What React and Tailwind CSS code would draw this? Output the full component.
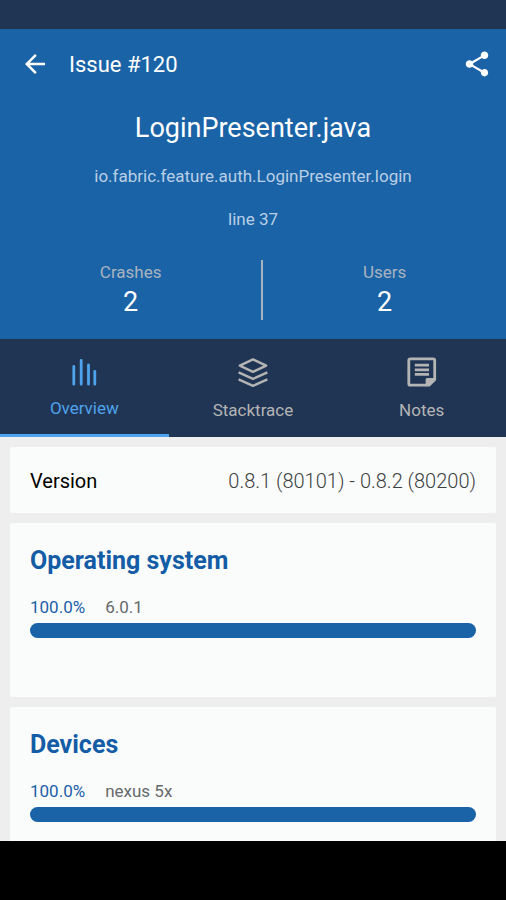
import { useState } from 'react';
import { MdArrowBack, MdShare } from 'react-icons/md';

const issue = {
  number: 120,
  file: 'LoginPresenter.java',
  method: 'io.fabric.feature.auth.LoginPresenter.login',
  line: 37,
  crashes: 2,
  users: 2,
  versions: '0.8.1 (80101) - 0.8.2 (80200)',
};

const breakdowns = [
  { title: 'Operating system', name: '6.0.1', percent: 100 },
  { title: 'Devices', name: 'nexus 5x', percent: 100 },
];

function OverviewIcon() {
  return (
    <svg className="w-8 h-8" viewBox="0 0 32 32" fill="none" stroke="currentColor" strokeWidth="2.8" strokeLinecap="round" aria-hidden="true">
      <path d="M5.8 10.5V28.2M13.2 4.3V28.2M20.5 9V28.2M26.8 15.3V28.2" />
    </svg>
  );
}

function StackIcon() {
  return (
    <svg className="w-8 h-8" viewBox="0 0 32 32" fill="none" stroke="currentColor" strokeWidth="2.4" strokeLinejoin="round" aria-hidden="true">
      <path d="M16 3.4L29.2 9.6L16 15.8L2.8 9.6Z" />
      <path d="M1.6 16.4L16 22.8L30.4 16.4" />
      <path d="M1.6 23.4L16 29.8L30.4 23.4" />
    </svg>
  );
}

function NotesIcon() {
  return (
    <svg className="w-8 h-8" viewBox="0 0 32 32" fill="none" stroke="currentColor" strokeWidth="2.8" aria-hidden="true">
      <path d="M20.5 29.2H4.3Q2.8 29.2 2.8 27.7V4.3Q2.8 2.8 4.3 2.8H27.2Q28.7 2.8 28.7 4.3V22.5" />
      <path d="M8.8 9.2H23M8.8 13.8H23M8.8 18.4H23" />
      <path d="M30.1 22V24.2L23.7 30.6H19.6V23.5Q19.6 22 21.1 22Z" fill="currentColor" stroke="none" />
    </svg>
  );
}

const tabs = [
  { id: 'overview', label: 'Overview', Icon: OverviewIcon },
  { id: 'stacktrace', label: 'Stacktrace', Icon: StackIcon },
  { id: 'notes', label: 'Notes', Icon: NotesIcon },
];

function Stat({ label, value }) {
  return (
    <div className="flex flex-col items-center">
      <span className="text-[17px] leading-6 text-[#a9b3bf]">{label}</span>
      <span className="text-[27px] leading-9 text-white">{value}</span>
    </div>
  );
}

function BreakdownCard({ title, name, percent }) {
  return (
    <section className="bg-[#fafcfb] rounded-xs px-5 pt-5 pb-[59px]">
      <h2 className="text-[25px] leading-9 font-bold text-[#145ca6]">{title}</h2>
      <div className="mt-4 flex gap-5 text-[17px] leading-6">
        <span className="text-[#1b5fa8]">{percent.toFixed(1)}%</span>
        <span className="text-[#66696b]">{name}</span>
      </div>
      <div
        className="mt-1 h-[15px]"
        role="progressbar"
        aria-label={name}
        aria-valuenow={percent}
      >
        <div className="h-full rounded-full bg-[#1b63a7]" style={{ width: `${percent}%` }} />
      </div>
    </section>
  );
}

export default function App() {
  const [activeTab, setActiveTab] = useState('overview');

  return (
    <div className="h-screen flex flex-col bg-[#eeeeee] font-[Roboto,sans-serif]">
      {/* Status bar */}
      <div className="h-[29px] shrink-0 bg-[#203554]" />

      {/* Issue header */}
      <header className="shrink-0 bg-[#1b63a7] pb-[19px]">
        <div className="h-[70px] flex items-center pl-5 pr-3.5">
          <button type="button" aria-label="Back" className="text-white">
            <MdArrowBack size={30} />
          </button>
          <span className="ml-[19px] pt-0.5 flex-1 text-[22px] leading-8 text-white">Issue #{issue.number}</span>
          <button type="button" aria-label="Share" className="text-white">
            <MdShare size={30} />
          </button>
        </div>

        <div className="flex flex-col items-center pt-[11px]">
          <h1 className="text-[27px] leading-9 text-white">{issue.file}</h1>
          <p className="mt-[18px] text-[17px] leading-6 text-[#b9cfe6]">{issue.method}</p>
          <p className="mt-[19px] text-[17px] leading-6 text-[#b9cfe6]">line {issue.line}</p>
        </div>

        <div className="mt-[29px] grid grid-cols-[14fr_2px_13fr] items-center">
          <Stat label="Crashes" value={issue.crashes} />
          <div className="h-15 bg-[#a9b3bf]" />
          <Stat label="Users" value={issue.users} />
        </div>
      </header>

      {/* Tabs */}
      <div role="tablist" className="shrink-0 grid grid-cols-3 bg-[#203554]">
        {tabs.map(({ id, label, Icon }) => {
          const active = id === activeTab;
          return (
            <button
              key={id}
              type="button"
              role="tab"
              aria-selected={active}
              onClick={() => setActiveTab(id)}
              className={`h-[98px] pt-0.5 flex flex-col items-center justify-center text-[17px] leading-6 ${
                active ? 'gap-2 border-b-3 border-[#4fa3ec] text-[#4fa3ec]' : 'gap-2.5 text-[#b4b4b4]'
              }`}
            >
              <Icon />
              <span>{label}</span>
            </button>
          );
        })}
      </div>

      {/* Tab content */}
      <main className="flex-1 min-h-0 overflow-hidden flex flex-col gap-2.5 p-2.5 pb-0 *:shrink-0">
        <section className="bg-[#fafcfb] rounded-xs px-5 pt-[21px] pb-[19px] flex items-center justify-between text-[20px] leading-[26px]">
          <span className="text-black">Version</span>
          <span className="font-light text-[#3c3f41]">{issue.versions}</span>
        </section>
        {breakdowns.map((item) => (
          <BreakdownCard key={item.title} {...item} />
        ))}
      </main>

      {/* Navigation bar */}
      <div className="h-[59px] shrink-0 bg-black" />
    </div>
  );
}
